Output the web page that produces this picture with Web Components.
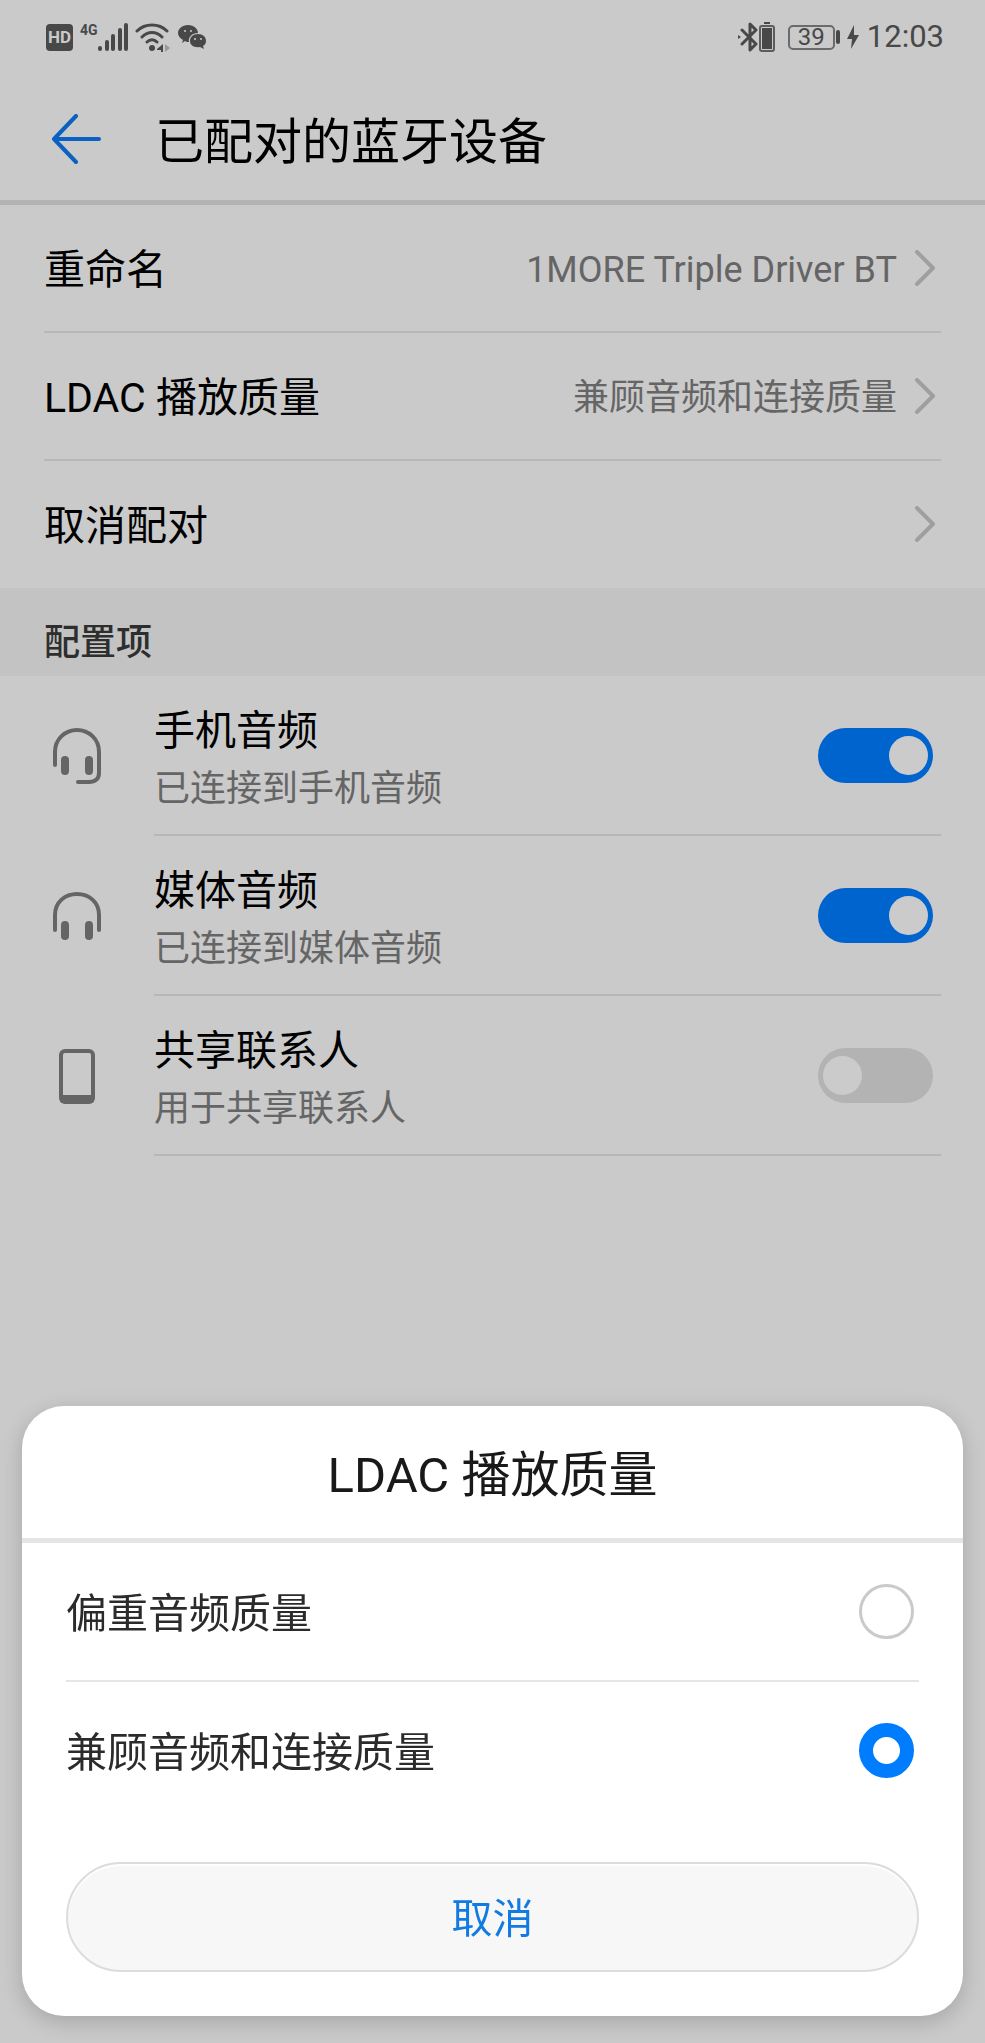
<!DOCTYPE html>
<html lang="zh-CN">
<head>
<meta charset="utf-8">
<meta name="viewport" content="width=device-width, initial-scale=1">
<title>已配对的蓝牙设备</title>
<style>
    body {
        margin: 0;
        min-height: 100vh;
        background: #cacaca;
        color: #000;
        font-family: Roboto, "Noto Sans CJK SC", sans-serif;
    }
</style>
</head>
<body>

<status-bar battery="39" time="12:03"></status-bar>
<page-header>已配对的蓝牙设备</page-header>

<main>
    <nav-row>重命名<span slot="value">1MORE Triple Driver BT</span></nav-row>
    <nav-row>LDAC 播放质量<span slot="value">兼顾音频和连接质量</span></nav-row>
    <nav-row last>取消配对</nav-row>

    <section-title>配置项</section-title>

    <switch-row icon="headset" checked>手机音频<span slot="summary">已连接到手机音频</span></switch-row>
    <switch-row icon="headphones" checked>媒体音频<span slot="summary">已连接到媒体音频</span></switch-row>
    <switch-row icon="phone">共享联系人<span slot="summary">用于共享联系人</span></switch-row>
</main>

<bottom-sheet>
    <span slot="title">LDAC 播放质量</span>
    <radio-row>偏重音频质量</radio-row>
    <radio-row checked last>兼顾音频和连接质量</radio-row>
    <span slot="cancel">取消</span>
</bottom-sheet>

<script>
const createTemplate = html => {
    const template = document.createElement("template");
    template.innerHTML = html;
    return template;
};

class BaseElement extends HTMLElement {
    connectedCallback() {
        if (!this.shadowRoot) {
            this.attachShadow({mode: "open"});
            this.shadowRoot.appendChild(this.constructor.template.content.cloneNode(true));
            this.render();
        }
    }

    render() {}

    find(selector) {
        return this.shadowRoot.querySelector(selector);
    }
}

/* icons */

const icons = {
    back: [50, 50, `
        <g fill="none" stroke="#0b61c1" stroke-width="4" stroke-linecap="round" stroke-linejoin="round">
            <path d="M25 2 3 25l22 23M3 25h45"/>
        </g>`],
    chevron: [20, 36, `
        <path d="M2 2l16 16L2 34" fill="none" stroke="#9f9f9f" stroke-width="4" stroke-linecap="round" stroke-linejoin="round"/>`],
    headset: [50, 56, `
        <g fill="none" stroke="#656565" stroke-width="4" stroke-linecap="round">
            <path d="M3 37V24C3 11 13 2 25 2s22 9 22 22v21c0 6-4 9-10 9H26"/>
            <path d="M13 32v11M37 32v11" stroke-width="8"/>
        </g>`],
    headphones: [50, 50, `
        <g fill="none" stroke="#656565" stroke-width="4" stroke-linecap="round">
            <path d="M3 39V24C3 11 13 3 25 3s22 8 22 21v15"/>
            <path d="M13 34v11M37 34v11" stroke-width="8"/>
        </g>`],
    phone: [50, 56, `
        <rect x="9" y="3" width="32" height="51" rx="4" fill="none" stroke="#656565" stroke-width="4"/>
        <path d="M8 47h34v5q0 3-3 3H11q-3 0-3-3z" fill="#656565"/>`],
    signal: [30, 30, `
        <path d="M2 26v1M9 20v7M15 14v13M22 8v19M28 3v24" fill="none" stroke="#484848" stroke-width="4" stroke-linecap="round"/>`],
    wifi: [36, 30, `
        <g fill="none" stroke="#484848" stroke-width="3" stroke-linecap="round">
            <path d="M2 9C10 1 24 1 32 9M7 15c6-6 14-6 20 0M12 20c3-3 7-3 10 0"/>
        </g>
        <circle cx="17" cy="26" r="3" fill="#484848"/>
        <path d="M28 22v8h-2v-2h-4v-1z" fill="#484848"/>
        <path d="M30 22l5 4-5 4z" fill="#999"/>`],
    wechat: [28, 28, `
        <path d="M10 2c6 0 10 4 10 8-6 0-10 4-9 9-1 0-3 0-4-1l-3 2 1-3C2 15 0 13 0 10c0-4 4-8 10-8z" fill="#484848"/>
        <path d="M20 11c5 0 8 3 8 7 0 2-1 4-3 5l1 3-4-2c-6 1-10-2-10-6s3-7 8-7z" fill="#484848"/>
        <g fill="#cacaca">
            <circle cx="7" cy="8" r="1"/><circle cx="13" cy="8" r="1"/>
            <circle cx="17" cy="16" r="1"/><circle cx="23" cy="16" r="1"/>
        </g>`],
    bluetooth: [20, 30, `
        <path d="M4 8l14 14-6 6V2l6 6L4 22" fill="none" stroke="#484848" stroke-width="3" stroke-linejoin="round" stroke-linecap="round"/>
        <path d="M0 13l3 2-3 2z" fill="#484848"/>`],
    device: [18, 30, `
        <path d="M6 1h6" stroke="#484848" stroke-width="2"/>
        <rect x="2" y="4" width="14" height="25" rx="2" fill="none" stroke="#5c5c5c" stroke-width="2"/>
        <rect x="4" y="6" width="10" height="21" fill="#484848"/>`],
    bolt: [12, 24, `
        <path d="M7 0 0 14h5l-1 10 8-14H7z" fill="#484848"/>`]
};

class UiIcon extends BaseElement {
    static get observedAttributes() {
        return ["name"];
    }

    attributeChangedCallback() {
        if (this.shadowRoot) {
            this.render();
        }
    }

    render() {
        const icon = icons[this.getAttribute("name")];
        if (!icon) {
            return;
        }

        const [width, height, shapes] = icon;
        const svg = this.find("svg");
        svg.setAttribute("viewBox", `0 0 ${width} ${height}`);
        svg.setAttribute("width", width);
        svg.setAttribute("height", height);
        svg.innerHTML = shapes;
    }
}
UiIcon.template = createTemplate(`
    <style>
        :host { display: block; flex: none; }
        svg { display: block; }
    </style>
    <svg aria-hidden="true"></svg>
`);

/* top of the screen */

class StatusBar extends BaseElement {
    render() {
        this.find(".level").textContent = this.getAttribute("battery");
        this.find("time").textContent = this.getAttribute("time");
    }
}
StatusBar.template = createTemplate(`
    <style>
        :host {
            display: flex;
            justify-content: space-between;
            align-items: center;
            height: 74px;
            padding: 0 41px 0 46px;
            color: #484848;
        }

        div { display: flex; align-items: center; }
        .left { gap: 7px; }

        .hd {
            width: 27px;
            border-radius: 4px;
            background: #484848;
            color: #cacaca;
            font-size: 17px;
            font-weight: 700;
            line-height: 27px;
            text-align: center;
        }

        .mobile { align-items: flex-start; }
        .mobile span { font-size: 14px; font-weight: 700; line-height: 16px; }

        .battery { margin: 0 7px 0 12px; }

        .level {
            box-sizing: border-box;
            width: 47px;
            border: 2px solid #6b6b6b;
            border-radius: 5px;
            font-size: 24px;
            line-height: 21px;
            text-align: center;
        }

        .tip {
            width: 4px;
            height: 14px;
            margin-left: 1px;
            border-radius: 2px;
            background: #484848;
        }

        time { margin-left: 8px; font-size: 31px; line-height: 36px; }
    </style>

    <div class="left">
        <span class="hd">HD</span>
        <div class="mobile"><span>4G</span><ui-icon name="signal"></ui-icon></div>
        <ui-icon name="wifi"></ui-icon>
        <ui-icon name="wechat"></ui-icon>
    </div>
    <div>
        <ui-icon name="bluetooth"></ui-icon>
        <ui-icon name="device"></ui-icon>
        <div class="battery"><span class="level"></span><span class="tip"></span></div>
        <ui-icon name="bolt"></ui-icon>
        <time></time>
    </div>
`);

class PageHeader extends BaseElement {}
PageHeader.template = createTemplate(`
    <style>
        :host {
            display: flex;
            align-items: center;
            gap: 54px;
            box-sizing: border-box;
            height: 131px;
            padding: 4px 44px 0 51px;
            border-bottom: 5px solid #b3b3b3;
        }

        button { padding: 0; border: 0; background: none; }
        h1 { margin: 0; padding-top: 8px; font-size: 49px; font-weight: 400; line-height: 72px; }
    </style>

    <button type="button" aria-label="返回"><ui-icon name="back"></ui-icon></button>
    <h1><slot></slot></h1>
`);

/* list rows */

class NavRow extends BaseElement {}
NavRow.template = createTemplate(`
    <style>
        :host { display: block; padding: 0 44px; }

        button {
            display: flex;
            align-items: center;
            box-sizing: border-box;
            width: 100%;
            height: 128px;
            padding: 0 6px 0 0;
            border: 0;
            border-bottom: 2px solid #b7b7b7;
            background: none;
            color: inherit;
            font: inherit;
            font-size: 41px;
            line-height: 60px;
            text-align: left;
        }

        :host([last]) button { height: 127px; border-bottom-color: transparent; }

        .label, .value { padding-top: 4px; }
        .label { flex: 1; }
        .value { margin-right: 18px; color: #656565; font-size: 36px; }
    </style>

    <button type="button">
        <span class="label"><slot></slot></span>
        <span class="value"><slot name="value"></slot></span>
        <ui-icon name="chevron"></ui-icon>
    </button>
`);

class SectionTitle extends BaseElement {}
SectionTitle.template = createTemplate(`
    <style>
        :host { display: block; padding: 29px 44px 7px; background: #c3c3c3; }
        h2 { margin: 0; color: #2e2e2e; font-size: 36px; font-weight: 500; line-height: 52px; }
    </style>

    <h2><slot></slot></h2>
`);

class SwitchRow extends BaseElement {
    render() {
        this.find("ui-icon").setAttribute("name", this.getAttribute("icon"));
        this.find("input").checked = this.hasAttribute("checked");
    }
}
SwitchRow.template = createTemplate(`
    <style>
        :host { display: block; padding: 0 44px 0 52px; }

        label { display: flex; align-items: center; gap: 52px; }

        .body {
            display: flex;
            flex: 1;
            align-items: center;
            justify-content: space-between;
            box-sizing: border-box;
            height: 160px;
            padding-right: 8px;
            border-bottom: 2px solid #b7b7b7;
        }

        .text { padding-top: 8px; }
        .title, .summary { display: block; }
        .title { font-size: 41px; line-height: 60px; }
        .summary { color: #656565; font-size: 36px; line-height: 56px; }

        input {
            appearance: none;
            display: flex;
            align-items: center;
            box-sizing: border-box;
            width: 115px;
            height: 55px;
            margin: 0;
            padding: 0 5px;
            border-radius: 28px;
            background: #b3b3b3;
        }

        input::before {
            content: "";
            width: 39px;
            height: 39px;
            border-radius: 50%;
            background: #cbcbcb;
        }

        input:checked { justify-content: flex-end; background: #0064cf; }
    </style>

    <label>
        <ui-icon></ui-icon>
        <span class="body">
            <span class="text">
                <span class="title"><slot></slot></span>
                <span class="summary"><slot name="summary"></slot></span>
            </span>
            <input type="checkbox" role="switch">
        </span>
    </label>
`);

/* dialog */

class RadioRow extends BaseElement {
    render() {
        this.input = this.find("input");
        this.input.checked = this.hasAttribute("checked");
        this.input.addEventListener("change", () => {
            // each radio lives in its own shadow root, so the group is kept by hand
            this.parentElement.querySelectorAll("radio-row").forEach(row => {
                row.input.checked = row === this;
            });
        });
    }
}
RadioRow.template = createTemplate(`
    <style>
        :host { display: block; padding: 0 44px; }

        label {
            display: flex;
            align-items: center;
            justify-content: space-between;
            box-sizing: border-box;
            height: 139px;
            padding-right: 5px;
            border-bottom: 2px solid #e5e5e5;
            color: #2b2b2b;
            font-size: 41px;
            line-height: 60px;
        }

        :host([last]) label { border-bottom-color: transparent; }

        span { padding-top: 4px; }

        input {
            appearance: none;
            box-sizing: border-box;
            width: 55px;
            height: 55px;
            margin: 0;
            border: 3px solid #cacaca;
            border-radius: 50%;
        }

        input:checked { border: 14px solid #007dff; }
    </style>

    <label><span><slot></slot></span><input type="radio"></label>
`);

class BottomSheet extends BaseElement {
    render() {
        this.find("button").addEventListener("click", () => this.remove());
    }
}
BottomSheet.template = createTemplate(`
    <style>
        :host {
            position: fixed;
            right: 22px;
            bottom: 27px;
            left: 22px;
            border-radius: 42px;
            background: #fff;
            box-shadow: 0 6px 22px rgba(0, 0, 0, 0.18);
        }

        h2 {
            margin: 0;
            padding: 34px 44px 26px;
            border-bottom: 5px solid #e5e5e5;
            color: #191919;
            font-size: 49px;
            font-weight: 400;
            line-height: 72px;
            text-align: center;
        }

        footer { padding: 41px 44px 44px; }

        button {
            box-sizing: border-box;
            width: 100%;
            height: 110px;
            padding: 4px 0 0;
            border: 2px solid #dcdcdc;
            border-radius: 55px;
            background: #f7f7f7;
            box-shadow: inset 0 2px 0 #fff;
            color: #127be2;
            font: inherit;
            font-size: 41px;
            line-height: 60px;
        }
    </style>

    <section role="dialog" aria-labelledby="title">
        <h2 id="title"><slot name="title"></slot></h2>
        <slot></slot>
        <footer><button type="button"><slot name="cancel"></slot></button></footer>
    </section>
`);

customElements.define("ui-icon", UiIcon);
customElements.define("status-bar", StatusBar);
customElements.define("page-header", PageHeader);
customElements.define("nav-row", NavRow);
customElements.define("section-title", SectionTitle);
customElements.define("switch-row", SwitchRow);
customElements.define("radio-row", RadioRow);
customElements.define("bottom-sheet", BottomSheet);
</script>
</body>
</html>
